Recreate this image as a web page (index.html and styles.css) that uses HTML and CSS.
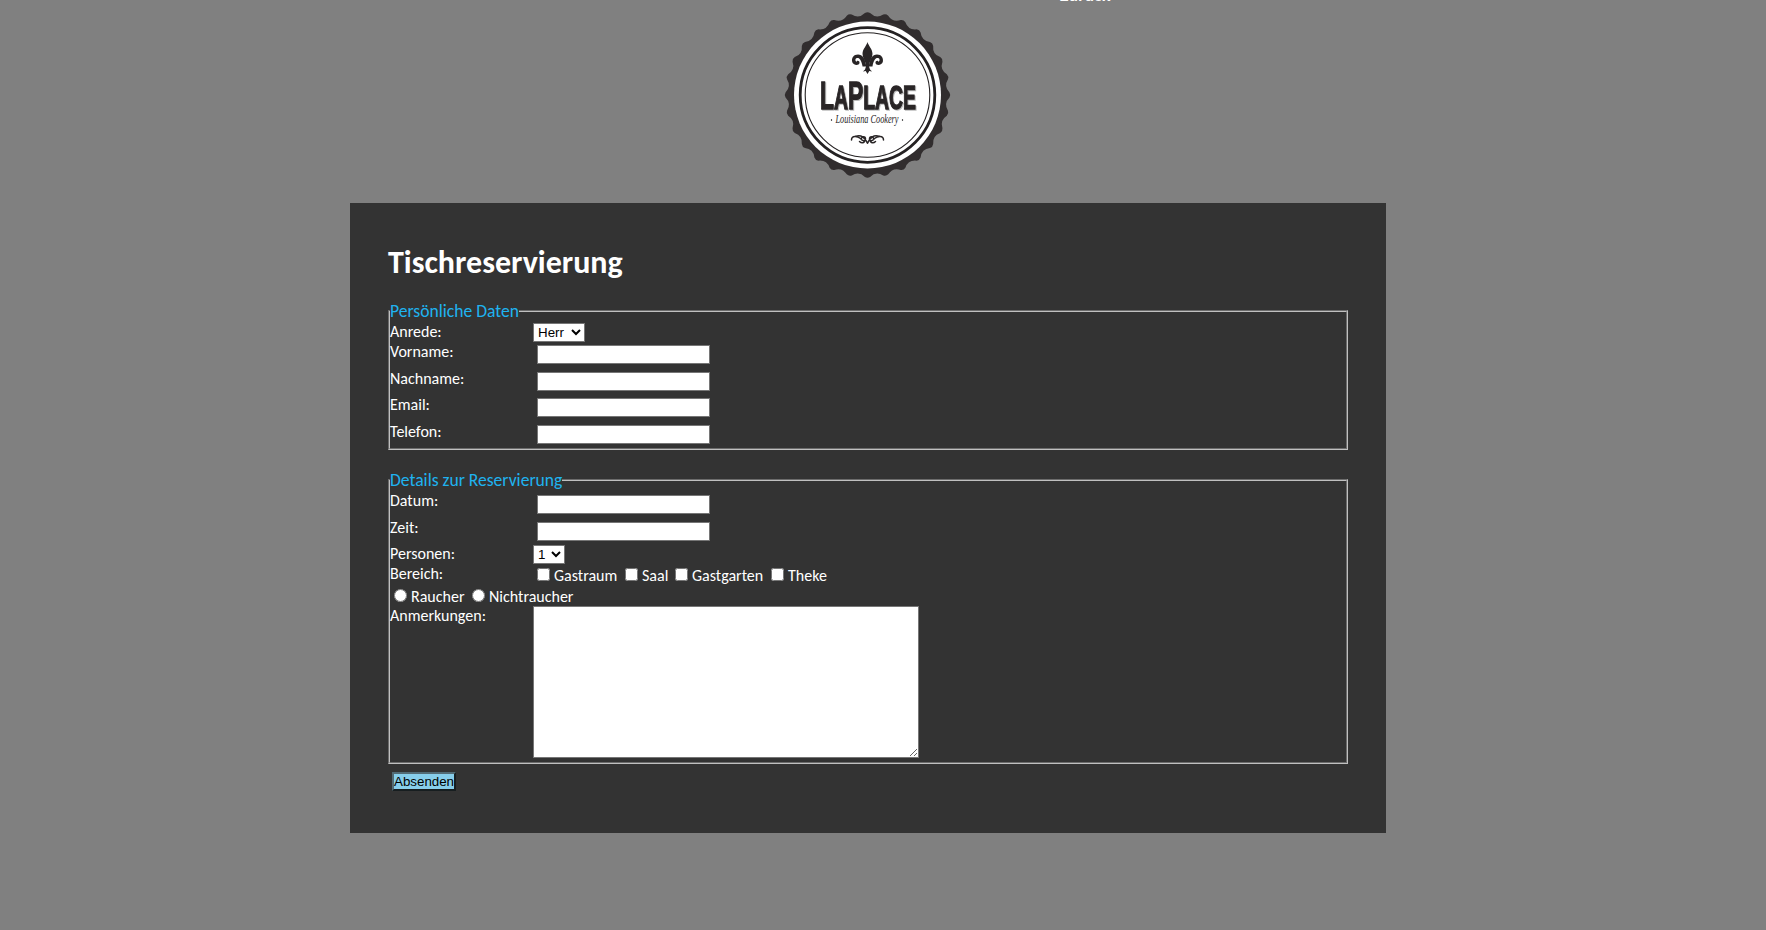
FILE: index.html
```html
<!DOCTYPE html>
<html lang="de">
<head>
<meta charset="utf-8">
<title>Tischreservierung</title>
<link rel="stylesheet" href="styles.css">
</head>
<body>
<header class="header">
  <svg class="logo" viewBox="-84.5 -84 168 168" width="168" height="168" role="img" aria-label="LaPlace Louisiana Cookery">
    <path id="seal" fill="#312d2e" d=""/>
    <circle r="73.5" fill="#fff"/>
    <circle r="67.3" fill="none" stroke="#242122" stroke-width="2.8"/>
    <circle r="62.3" fill="none" stroke="#242122" stroke-width="1.1"/>
    <g fill="#292526">
      <path d="M0-53C-1-49-5-46-5-41C-5-37-2-34-1.5-30H1.5C2-34 5-37 5-41C5-46 1-49 0-53Z"/>
      <path id="petal" d="M-1.5-29.5C-2-36-5-40.5-9.5-40.5C-14-40.5-16-37-15.4-33.5C-14.8-30-9-28.5-8-32C-7.6-34.5-11-35-11-33C-13-35-12-37.5-9.5-37C-7-36.5-6-33-5-29.5Z"/>
      <use href="#petal" transform="scale(-1 1)"/>
      <path d="M-5-30.5H5V-28.5H-5ZM-1.5-28.5H1.5L2.5-25.5L4.5-23.5L1.8-24L0-21L-1.8-24L-4.5-23.5L-2.5-25.5Z"/>
    </g>
    <text class="logo-name" x="-47.500" y="14" textLength="96" lengthAdjust="spacingAndGlyphs"><tspan class="cap">L</tspan>A<tspan class="cap">P</tspan>LACE</text>
    <text class="logo-script" x="-32" y="28" textLength="63" lengthAdjust="spacingAndGlyphs">Louisiana Cookery</text>
    <circle cx="-36" cy="25" r=".7"/><circle cx="35" cy="25" r=".7"/>
    <g fill="none" stroke="#292526" stroke-width="1.5" stroke-linecap="round">
      <path id="curl" d="M-16 45C-16 40-10 41-7 43.500C-5 46-2 47-2 44C-2 41-6 41-6 43.500M-12 41.500C-6 39-3 43 0 48M-8 46.500C-6 48.500-4 48-3 46.500"/>
      <use href="#curl" transform="scale(-1 1)"/>
    </g>
  </svg>
  <a class="back">Zurück</a>
</header>
<main class="panel">
  <h1 class="title">Tischreservierung</h1>
  <form>
    <fieldset class="group personal">
      <legend>Persönliche Daten</legend>
      <div class="row short"><label>Anrede:</label><select class="salutation"><option>Herr</option><option>Frau</option></select></div>
      <div class="row"><label>Vorname:</label><input class="field" type="text"></div>
      <div class="row"><label>Nachname:</label><input class="field" type="text"></div>
      <div class="row"><label>Email:</label><input class="field" type="text"></div>
      <div class="row"><label>Telefon:</label><input class="field" type="text"></div>
    </fieldset>
    <fieldset class="group details">
      <legend>Details zur Reservierung</legend>
      <div class="row"><label>Datum:</label><input class="field" type="text"></div>
      <div class="row"><label>Zeit:</label><input class="field" type="text"></div>
      <div class="row short"><label>Personen:</label><select class="persons"><option>1</option><option>2</option></select></div>
      <div class="row areas"><label>Bereich:</label>
        <span class="choice c1"><input type="checkbox">Gastraum</span>
        <span class="choice c2"><input type="checkbox">Saal</span>
        <span class="choice c3"><input type="checkbox">Gastgarten</span>
        <span class="choice"><input type="checkbox">Theke</span>
      </div>
      <div class="row smoking">
        <span class="choice r1"><input type="radio" name="smoke">Raucher</span>
        <span class="choice"><input type="radio" name="smoke">Nichtraucher</span>
      </div>
      <div class="row notes"><label>Anmerkungen:</label><textarea></textarea></div>
    </fieldset>
    <button class="submit" type="button">Absenden</button>
  </form>
</main>
<script src="seal.js"></script>
</body>
</html>
```
FILE: seal.js
```js
// Scalloped edge of the round seal
const points = 28;
let d = "";
for (let i = 0; i < points; i++) {
  const at = (k, r) => {
    const a = (i + k) * 2 * Math.PI / points - Math.PI / 2;
    return (r * Math.cos(a)).toFixed(2) + " " + (r * Math.sin(a)).toFixed(2);
  };
  d += (i ? "L" : "M") + at(-0.14, 82) + "Q" + at(0, 83.6) + " " + at(0.14, 82) + "Q" + at(0.5, 76.5) + " " + at(0.86, 82);
}
document.getElementById("seal").setAttribute("d", d + "Z");
```
FILE: styles.css
```css
* { box-sizing: border-box; }
body { margin: 0; height: 930px; overflow: hidden; background: #808080; color: #fff; font-family: Carlito, Lato, sans-serif; font-size: 16px; }
.header { height: 203px; padding: 10.5px 0 0 783px; display: flex; align-items: flex-start; }
.logo { overflow: visible; }
.back { margin: -25px 0 0 109px; font: bold 14.5px/20px "Open Sans", sans-serif; }
.logo-name { font: bold 33px "Liberation Sans", sans-serif; fill: #292526; stroke: #292526; stroke-width: 1.3; filter: drop-shadow(1.2px 1.2px 0 #bbb); }
.logo-name .cap { font-size: 39px; }
.logo-script { font: italic 11.5px "Liberation Serif", serif; fill: #292526; }
.panel { width: 1036px; height: 630px; margin-left: 350px; padding: 40px 38px 0; background: #333; }
.title { margin: 0; height: 58px; font-size: 32px; line-height: 40px; font-weight: bold; }
.group { margin: 0; padding: 0; border: 2px groove #c0c0c0; min-width: 0; }
.group legend { padding: 0; margin-bottom: 1px; color: #1fb3f0; font-size: 17.6px; line-height: 20px; }
.personal { height: 149px; margin-bottom: 20px; }
.details { height: 294px; }
.row { display: flex; align-items: flex-start; height: 26.6px; }
.row label { width: 143px; line-height: 20px; }
.short { height: 20px; }
.field { width: 173px; height: 19px; margin: 3px 0 0 4px; border: 1px solid #767676; background: #fff; }
.details .field { margin-top: 4px; }
select { height: 19px; margin: 1px 0 0; padding: 0; border: 1px solid #767676; border-radius: 0; background: #fff; color: #000; font: 13.33px "Liberation Sans", sans-serif; }
.salutation { width: 52px; }
.persons { width: 32px; }
.details .short { height: 19.5px; }
.areas, .smoking { height: 21px; }
.choice { display: flex; line-height: 24px; }
.choice input { width: 13px; height: 13px; margin: 4px 4px 0; }
.c1 { width: 88px; }
.c2 { width: 50px; }
.c3 { width: 96px; }
.r1 { width: 78px; }
textarea { width: 386px; height: 152px; margin: 0; border: 1px solid #767676; background: #fff; }
.submit { display: block; width: 64px; height: 19px; margin: 8px 0 0 4px; padding: 0; border: 2px outset #526b75; background: #87ceeb; color: #000; font: 13.33px/15px "Liberation Sans", sans-serif; white-space: nowrap; }
```
